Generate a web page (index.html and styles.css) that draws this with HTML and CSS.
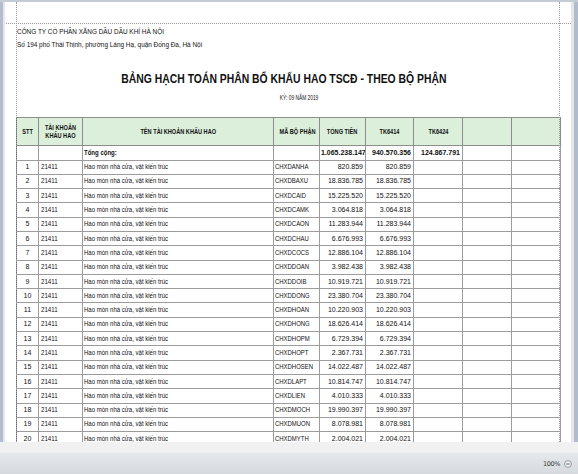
FILE: index.html
```html
<!DOCTYPE html>
<html lang="vi">
<head>
<meta charset="utf-8">
<title>Bảng hạch toán phân bổ khấu hao TSCĐ</title>
<link rel="stylesheet" href="styles.css">
</head>
<body>
<div class="app">
  <div class="viewport">
    <div class="edge-left"></div>
    <div class="page">
      <div class="guide guide-h"></div>
      <div class="guide guide-v1"></div>
      <div class="guide guide-v2"></div>
      <div class="sheet">
        <div class="company"><span class="s">CÔNG TY CỔ PHẦN XĂNG DẦU DẦU KHÍ HÀ NỘI</span></div>
        <div class="address"><span class="s">Số 194 phố Thái Thịnh, phường Láng Hạ, quận Đống Đa, Hà Nội</span></div>
        <div class="title"><span class="s">BẢNG HẠCH TOÁN PHÂN BỔ KHẤU HAO TSCĐ - THEO BỘ PHẬN</span></div>
        <div class="period"><span class="s">KỲ: 09 NĂM 2019</span></div>
        <table class="grid">
          <colgroup>
            <col class="w-stt"><col class="w-tk"><col class="w-name"><col class="w-bp"><col class="w-num"><col class="w-num2"><col class="w-num3"><col class="w-num3"><col class="w-last">
          </colgroup>
          <thead>
            <tr class="head">
              <th><span class="s">STT</span></th><th><span class="s">TÀI KHOẢN<br>KHẤU HAO</span></th><th><span class="s">TÊN TÀI KHOẢN KHẤU HAO</span></th><th><span class="s">MÃ BỘ PHẬN</span></th><th><span class="s">TỔNG TIỀN</span></th><th><span class="s">TK6414</span></th><th><span class="s">TK6424</span></th><th></th><th></th>
            </tr>
          </thead>
          <tbody>
            <tr class="total"><td></td><td></td><td class="l"><span class="s lbl">Tổng cộng:</span></td><td></td><td class="r">1.065.238.147</td><td class="r">940.570.356</td><td class="r">124.867.791</td><td></td><td></td></tr>
            <tr><td class="c">1</td><td class="l"><span class="s">21411</span></td><td class="l"><span class="s">Hao mòn nhà cửa, vật kiến trúc</span></td><td class="l"><span class="s">CHXDANHA</span></td><td class="r">820.859</td><td class="r">820.859</td><td></td><td></td><td></td></tr>
            <tr><td class="c">2</td><td class="l"><span class="s">21411</span></td><td class="l"><span class="s">Hao mòn nhà cửa, vật kiến trúc</span></td><td class="l"><span class="s">CHXDBAXU</span></td><td class="r">18.836.785</td><td class="r">18.836.785</td><td></td><td></td><td></td></tr>
            <tr><td class="c">3</td><td class="l"><span class="s">21411</span></td><td class="l"><span class="s">Hao mòn nhà cửa, vật kiến trúc</span></td><td class="l"><span class="s">CHXDCAID</span></td><td class="r">15.225.520</td><td class="r">15.225.520</td><td></td><td></td><td></td></tr>
            <tr><td class="c">4</td><td class="l"><span class="s">21411</span></td><td class="l"><span class="s">Hao mòn nhà cửa, vật kiến trúc</span></td><td class="l"><span class="s">CHXDCAMK</span></td><td class="r">3.064.818</td><td class="r">3.064.818</td><td></td><td></td><td></td></tr>
            <tr><td class="c">5</td><td class="l"><span class="s">21411</span></td><td class="l"><span class="s">Hao mòn nhà cửa, vật kiến trúc</span></td><td class="l"><span class="s">CHXDCAON</span></td><td class="r">11.283.944</td><td class="r">11.283.944</td><td></td><td></td><td></td></tr>
            <tr><td class="c">6</td><td class="l"><span class="s">21411</span></td><td class="l"><span class="s">Hao mòn nhà cửa, vật kiến trúc</span></td><td class="l"><span class="s">CHXDCHAU</span></td><td class="r">6.676.993</td><td class="r">6.676.993</td><td></td><td></td><td></td></tr>
            <tr><td class="c">7</td><td class="l"><span class="s">21411</span></td><td class="l"><span class="s">Hao mòn nhà cửa, vật kiến trúc</span></td><td class="l"><span class="s">CHXDCOCS</span></td><td class="r">12.886.104</td><td class="r">12.886.104</td><td></td><td></td><td></td></tr>
            <tr><td class="c">8</td><td class="l"><span class="s">21411</span></td><td class="l"><span class="s">Hao mòn nhà cửa, vật kiến trúc</span></td><td class="l"><span class="s">CHXDDOAN</span></td><td class="r">3.982.438</td><td class="r">3.982.438</td><td></td><td></td><td></td></tr>
            <tr><td class="c">9</td><td class="l"><span class="s">21411</span></td><td class="l"><span class="s">Hao mòn nhà cửa, vật kiến trúc</span></td><td class="l"><span class="s">CHXDDOIB</span></td><td class="r">10.919.721</td><td class="r">10.919.721</td><td></td><td></td><td></td></tr>
            <tr><td class="c">10</td><td class="l"><span class="s">21411</span></td><td class="l"><span class="s">Hao mòn nhà cửa, vật kiến trúc</span></td><td class="l"><span class="s">CHXDDONG</span></td><td class="r">23.380.704</td><td class="r">23.380.704</td><td></td><td></td><td></td></tr>
            <tr><td class="c">11</td><td class="l"><span class="s">21411</span></td><td class="l"><span class="s">Hao mòn nhà cửa, vật kiến trúc</span></td><td class="l"><span class="s">CHXDHOAN</span></td><td class="r">10.220.903</td><td class="r">10.220.903</td><td></td><td></td><td></td></tr>
            <tr><td class="c">12</td><td class="l"><span class="s">21411</span></td><td class="l"><span class="s">Hao mòn nhà cửa, vật kiến trúc</span></td><td class="l"><span class="s">CHXDHONG</span></td><td class="r">18.626.414</td><td class="r">18.626.414</td><td></td><td></td><td></td></tr>
            <tr><td class="c">13</td><td class="l"><span class="s">21411</span></td><td class="l"><span class="s">Hao mòn nhà cửa, vật kiến trúc</span></td><td class="l"><span class="s">CHXDHOPM</span></td><td class="r">6.729.394</td><td class="r">6.729.394</td><td></td><td></td><td></td></tr>
            <tr><td class="c">14</td><td class="l"><span class="s">21411</span></td><td class="l"><span class="s">Hao mòn nhà cửa, vật kiến trúc</span></td><td class="l"><span class="s">CHXDHOPT</span></td><td class="r">2.367.731</td><td class="r">2.367.731</td><td></td><td></td><td></td></tr>
            <tr><td class="c">15</td><td class="l"><span class="s">21411</span></td><td class="l"><span class="s">Hao mòn nhà cửa, vật kiến trúc</span></td><td class="l"><span class="s">CHXDHOSEN</span></td><td class="r">14.022.487</td><td class="r">14.022.487</td><td></td><td></td><td></td></tr>
            <tr><td class="c">16</td><td class="l"><span class="s">21411</span></td><td class="l"><span class="s">Hao mòn nhà cửa, vật kiến trúc</span></td><td class="l"><span class="s">CHXDLAPT</span></td><td class="r">10.814.747</td><td class="r">10.814.747</td><td></td><td></td><td></td></tr>
            <tr><td class="c">17</td><td class="l"><span class="s">21411</span></td><td class="l"><span class="s">Hao mòn nhà cửa, vật kiến trúc</span></td><td class="l"><span class="s">CHXDLIEN</span></td><td class="r">4.010.333</td><td class="r">4.010.333</td><td></td><td></td><td></td></tr>
            <tr><td class="c">18</td><td class="l"><span class="s">21411</span></td><td class="l"><span class="s">Hao mòn nhà cửa, vật kiến trúc</span></td><td class="l"><span class="s">CHXDMOCH</span></td><td class="r">19.990.397</td><td class="r">19.990.397</td><td></td><td></td><td></td></tr>
            <tr><td class="c">19</td><td class="l"><span class="s">21411</span></td><td class="l"><span class="s">Hao mòn nhà cửa, vật kiến trúc</span></td><td class="l"><span class="s">CHXDMUON</span></td><td class="r">8.078.981</td><td class="r">8.078.981</td><td></td><td></td><td></td></tr>
            <tr><td class="c">20</td><td class="l"><span class="s">21411</span></td><td class="l"><span class="s">Hao mòn nhà cửa, vật kiến trúc</span></td><td class="l"><span class="s">CHXDMYTH</span></td><td class="r">2.004.021</td><td class="r">2.004.021</td><td></td><td></td><td></td></tr>
          </tbody>
        </table>
      </div>
    </div>
    <div class="edge-right"></div>
  </div>
  <div class="hscroll"></div>
  <div class="status">
    <span class="zoom-label">100%</span>
    <svg class="zoom-out" width="8" height="8" viewBox="0 0 8 8"><circle cx="4" cy="4" r="3.4" fill="#f4f5f7" stroke="#8a8f98" stroke-width="0.9"/><line x1="2.2" y1="4" x2="5.8" y2="4" stroke="#5a5f68" stroke-width="1"/></svg>
  </div>
</div>
</body>
</html>
```

FILE: styles.css
```css
* { box-sizing: border-box; }
html, body { margin: 0; padding: 0; }
body {
  width: 578px;
  height: 474px;
  overflow: hidden;
  background: #f0f0f0;
  font-family: "Liberation Sans", Arial, sans-serif;
  color: #111111;
}
.app {
  display: flex;
  flex-direction: column;
  width: 578px;
  height: 474px;
}
.viewport {
  display: flex;
  height: 442px;
  border-top: 2px solid #c6ccd6;
  overflow: hidden;
}
.edge-left {
  width: 5px;
  flex: none;
  background: linear-gradient(to right, #b3bdcd 0, #b3bdcd 3px, #e3e7ee 3px);
}
.edge-right {
  width: 7px;
  flex: none;
  background: linear-gradient(to right, #e6e6e6 0, #e6e6e6 3px, #b0bbcc 3px);
}
.page {
  position: relative;
  flex: 1;
  background: #ffffff;
  overflow: hidden;
}
.guide { position: absolute; }
.guide-h {
  left: -5px;
  right: 0;
  top: 21px;
  border-top: 1px dotted #9a9a9a;
}
.guide-v1 {
  top: 0;
  bottom: 0;
  left: 11px;
  border-left: 1px dotted #9a9a9a;
}
.guide-v2 {
  top: 0;
  bottom: 0;
  left: 554px;
  border-left: 1px dotted #9a9a9a;
}

/* horizontally condensed text, as in the print preview */
.s {
  display: inline-block;
  white-space: nowrap;
  transform-origin: left center;
}

.sheet {
  margin-left: 11px;
  width: 544px;
  padding-top: 23px;
}
.company, .address {
  font-size: 7.5px;
  line-height: 13px;
  padding-left: 1px;
  white-space: nowrap;
}
.company .s, .address .s { transform: scaleX(.855); }
.title {
  margin-top: 20px;
  font-size: 12px;
  line-height: 16px;
  font-weight: bold;
  text-align: center;
  padding-right: 8px;
  white-space: nowrap;
}
.title .s { transform: scaleX(.865); transform-origin: center; }
.period {
  margin-top: 6px;
  font-size: 6.5px;
  line-height: 10px;
  text-align: center;
  padding-left: 22px;
}
.period .s { transform: scaleX(.74); transform-origin: center; }

.grid {
  margin-top: 14px;
  border-collapse: collapse;
  table-layout: fixed;
  width: 544px;
  font-size: 7px;
}
.w-stt { width: 22px; }
.w-tk { width: 44px; }
.w-name { width: 191px; }
.w-bp { width: 46px; }
.w-num { width: 46px; }
.w-num2 { width: 48px; }
.w-num3 { width: 49px; }
.w-last { width: 49px; }
.grid th, .grid td {
  border: 1px solid #9c9c9c;
  padding: 0 1px;
  white-space: nowrap;
  overflow: hidden;
}
.grid thead th {
  border-color: #8c8c8c;
}
.grid .head {
  height: 28px;
  background: #dbefdb;
}
.grid .head th {
  font-weight: bold;
  font-size: 7px;
  line-height: 8px;
  text-align: center;
  vertical-align: middle;
}
.grid .head .s { transform: scaleX(.8); transform-origin: center; }
.grid tbody tr { height: 14.3px; }
.grid tbody td { line-height: 9px; padding-bottom: 1px; }
.grid .total td { font-weight: bold; }
.grid .total { height: 14.5px; }
.grid td.l .s { transform: scaleX(.86); }
.grid td.l:nth-child(2) .s { transform: scaleX(.88); }
.grid td.l:nth-child(2) { padding-left: 2px; }
.grid td.l:nth-child(4) .s { transform: scaleX(.85); }
.grid .total .lbl { transform: scaleX(.76); }
.l { text-align: left; }
.r { text-align: right; padding-right: 2px !important; }
.c { text-align: center; }
.grid tr > :first-child { border-left-color: #6e6e6e; }
.hscroll {
  height: 11px;
  background: #f1f1f1;
}
.status {
  flex: 1;
  display: flex;
  align-items: center;
  justify-content: flex-end;
  gap: 4px;
  padding-right: 6px;
  background: linear-gradient(to bottom, #e5e8ec, #d6dadf);
}
.zoom-label {
  font-family: "DejaVu Sans", sans-serif;
  font-size: 6.5px;
  color: #3a3a3a;
  letter-spacing: -0.4px;
}
.zoom-out { display: block; }
```
